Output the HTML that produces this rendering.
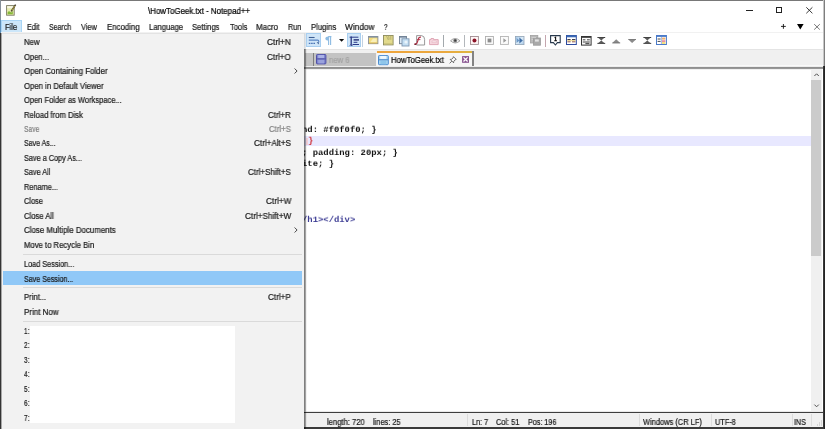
<!DOCTYPE html>
<html><head><meta charset="utf-8"><title>HowToGeek.txt - Notepad++</title>
<style>
*{margin:0;padding:0;box-sizing:border-box}
html,body{width:825px;height:429px;overflow:hidden;background:#fff}
body{position:relative;font-family:"Liberation Sans",sans-serif;font-size:8px;color:#1a1a1a}
.a{position:absolute}
.t{position:absolute;white-space:nowrap;line-height:10px;height:10px;transform-origin:0 0;will-change:transform;-webkit-text-stroke:.22px currentColor}
.m{font-family:"Liberation Mono",monospace;font-size:8.89px;-webkit-text-stroke:0;transform:scaleY(.9);transform-origin:0 7.5px}
svg{position:absolute;overflow:visible}
</style></head><body>

<!-- title bar + menubar + toolbar are white (body) -->
<!-- File highlight -->
<div class="a" style="left:1px;top:20px;width:21px;height:12.5px;background:#cce6f9;border:1px solid #a9d5f5"></div>

<div class="a" style="left:1px;top:32.2px;width:822px;height:1.2px;background:#f1f1f1"></div>
<!-- tab bar -->
<div class="a" style="left:304px;top:48.5px;width:519px;height:18.5px;background:#f0f0f0"></div>
<div class="a" style="left:304px;top:48.6px;width:519px;height:1.6px;background:linear-gradient(#e9e9e9,#e3e3e3 60%,#ececec)"></div>
<!-- inactive tab -->
<div class="a" style="left:305px;top:52.5px;width:71px;height:14px;background:#c3c3c3"></div>
<div class="a" style="left:312.7px;top:53px;width:1px;height:13.5px;background:#7e7e7e"></div>
<!-- active tab -->
<div class="a" style="left:376.8px;top:50.8px;width:96.7px;height:16px;background:#f6f6f6"></div>
<div class="a" style="left:376.8px;top:50.8px;width:96.7px;height:2.7px;background:linear-gradient(90deg,#eea43c,#eaa83e 70%,#dcb642)"></div>
<div class="a" style="left:472.2px;top:50.8px;width:1.6px;height:16px;background:#838383"></div>
<!-- tab/edit divider -->
<div class="a" style="left:474px;top:64.6px;width:348.6px;height:2.2px;background:linear-gradient(#f4f4f4,#fff 60%)"></div>
<div class="a" style="left:304px;top:66px;width:519px;height:1px;background:#ededed"></div>
<div class="a" style="left:304px;top:67px;width:519px;height:1px;background:#8f8f8f"></div>
<div class="a" style="left:304px;top:68px;width:519px;height:1px;background:#979797"></div>
<div class="a" style="left:306px;top:69px;width:505px;height:1px;background:#f0f0f0"></div>

<!-- editor -->
<div class="a" style="left:304px;top:135.7px;width:507px;height:10.5px;background:#e8e8ff"></div>
<div class="a" style="left:306.2px;top:137.5px;width:1.8px;height:7.5px;background:#f3cfd6"></div>
<div class="t m" style="left:307.6px;top:136.4px;color:#d0343c;font-weight:bold">}</div>
<div class="t m" style="left:302.3px;top:125.3px;color:#111;font-weight:bold">nd: #f0f0f0; }</div>
<div class="t m" style="left:302.3px;top:147.6px;color:#111;font-weight:bold">; padding: 20px; }</div>
<div class="t m" style="left:302.3px;top:158.8px;color:#111;font-weight:bold">ite; }</div>
<div class="t m" style="left:302.3px;top:214.5px;color:#3d3d94;font-weight:bold">/h1&gt;&lt;/div&gt;</div>

<!-- scrollbar -->
<div class="a" style="left:811px;top:68.5px;width:10.5px;height:343px;background:#f0f0f0"></div>
<div class="a" style="left:811.3px;top:80px;width:9.7px;height:176.4px;background:#cbcbcb"></div>
<svg style="left:813.6px;top:72.7px" width="6" height="4" viewBox="0 0 6 4"><path d="M0.4 3 L2.6 0.8 L4.8 3" fill="none" stroke="#505050" stroke-width="1"/></svg>
<svg style="left:813.7px;top:403.6px" width="6" height="4" viewBox="0 0 6 4"><path d="M0.4 0.6 L2.6 2.8 L4.8 0.6" fill="none" stroke="#505050" stroke-width="1"/></svg>

<!-- status bar -->
<div class="a" style="left:306px;top:410.6px;width:517px;height:1.3px;background:linear-gradient(#f4f4f4,#dedede)"></div>
<div class="a" style="left:304px;top:411.9px;width:519px;height:1.1px;background:#3e3e3e"></div>
<div class="a" style="left:304px;top:413px;width:519px;height:14.5px;background:#f0f0f0"></div>
<div class="a" style="left:467px;top:414px;width:1px;height:12px;background:#dcdcdc"></div>
<div class="a" style="left:638.5px;top:414px;width:1px;height:12px;background:#dcdcdc"></div>
<div class="a" style="left:710.5px;top:414px;width:1px;height:12px;background:#dcdcdc"></div>
<div class="a" style="left:791.5px;top:414px;width:1px;height:12px;background:#dcdcdc"></div>
<div class="a" style="left:810.5px;top:414px;width:1px;height:12px;background:#dcdcdc"></div>
<div class="a" style="left:304px;top:427.3px;width:521px;height:1.7px;background:#3a3a3a"></div>

<!-- window borders -->
<div class="a" style="left:0;top:0;width:825px;height:1.2px;background:#787878"></div>
<div class="a" style="left:0;top:0;width:1.1px;height:33.4px;background:linear-gradient(#858f98,#858f98 58%,#5f8fb8 62%,#5f8fb8)"></div>
<div class="a" style="left:823px;top:0;width:1px;height:66px;background:#c6c6c6"></div>
<div class="a" style="left:824px;top:0;width:1px;height:66px;background:#7e7e7e"></div>
<div class="a" style="left:822.6px;top:66px;width:2.4px;height:363px;background:linear-gradient(90deg,#555,#262626 40%,#222)"></div>

<!-- app icon -->
<svg style="left:6px;top:4px" width="11" height="12" viewBox="0 0 11 12">
<rect x="0.6" y="1.6" width="7.6" height="9.6" fill="#e6ecae" stroke="#7a7a62" stroke-width="0.9"/>
<rect x="1.2" y="2.2" width="6.4" height="2" fill="#f6f6e6"/>
<path d="M1.6 8.2 Q3 6.4 4.4 8 Q5.6 9.4 6.8 6.6 L6.8 10.2 L1.6 10.2 Z" fill="#86b83a"/>
<path d="M9.6 0.6 L5.2 7.4" stroke="#3a3326" stroke-width="1.5" fill="none"/>
<path d="M8.9 1.8 L5.9 6.4" stroke="#d8c040" stroke-width="0.7" fill="none"/>
</svg>

<!-- window controls -->
<div class="a" style="left:746.2px;top:9.6px;width:6.8px;height:1px;background:#222"></div>
<div class="a" style="left:775.8px;top:6.8px;width:6.3px;height:6px;border:1px solid #222"></div>
<svg style="left:806px;top:6.7px" width="7" height="7" viewBox="0 0 7 7"><path d="M0.3 0.3 L6.4 6.3 M6.4 0.3 L0.3 6.3" stroke="#222" stroke-width="0.9" fill="none"/></svg>
<!-- plus, arrow, x -->
<svg style="left:781.4px;top:24px" width="5" height="5" viewBox="0 0 5 5"><path d="M2.4 0 V4.8 M0 2.4 H4.8" stroke="#111" stroke-width="0.9" fill="none"/></svg>
<svg style="left:797.4px;top:24.2px" width="7" height="6" viewBox="0 0 7 6"><path d="M0 0 H6.6 L3.3 5.4 Z" fill="#000"/></svg>
<svg style="left:813.5px;top:24px" width="6" height="6" viewBox="0 0 6 6"><path d="M0.2 0.2 L5.8 5.6 M5.8 0.2 L0.2 5.6" stroke="#555" stroke-width="0.8" fill="none"/></svg>

<!-- toolbar -->
<!-- 1 wrap (checked) -->
<div class="a" style="left:306.4px;top:33.4px;width:14.2px;height:13.8px;background:#cfe5f8;border:0.8px solid #a9cff0"></div>
<svg style="left:308px;top:36px" width="12" height="10" viewBox="0 0 12 10">
<path d="M0.8 1.5 H6.6" stroke="#3d5f94" stroke-width="1.1"/>
<path d="M0.8 4.1 H9.6 Q10.8 4.1 10.8 5.4 V6.2" stroke="#5b86c4" stroke-width="1.1" fill="none"/>
<path d="M0.8 7.4 H7" stroke="#4a73b4" stroke-width="1.1" stroke-dasharray="1.6 0.7"/>
<path d="M8.6 6.2 L10.8 8.4 L10.9 6.2 Z" fill="#3d5f94"/>
</svg>
<!-- 2 pilcrow -->
<svg style="left:325px;top:36px" width="7" height="10" viewBox="0 0 7 10">
<path d="M3.2 0.6 H6.4 M3.6 0.6 V9 M5.6 0.6 V9" stroke="#8dbbe2" stroke-width="1.1" fill="none"/>
<path d="M3.4 0.6 Q0.4 0.6 0.4 2.6 Q0.4 4.6 3.4 4.6 Z" fill="#8dbbe2"/>
</svg>
<!-- 3 dropdown -->
<svg style="left:339px;top:39.4px" width="6" height="3" viewBox="0 0 6 3"><path d="M0 0 H5.2 L2.6 2.8 Z" fill="#0a0a0a"/></svg>
<!-- 4 indent guide (checked) -->
<div class="a" style="left:346.6px;top:33.4px;width:14.2px;height:13.8px;background:#cfe5f8;border:0.8px solid #a9cff0"></div>
<svg style="left:349px;top:35.6px" width="11" height="11" viewBox="0 0 11 11">
<path d="M2.2 0.6 V10" stroke="#1d2a78" stroke-width="1.2"/>
<path d="M0.6 1.2 H9.4" stroke="#2a3a8a" stroke-width="1"/>
<path d="M4.6 3.9 H10" stroke="#141e6a" stroke-width="1.3"/>
<path d="M4.6 6.3 H8.4" stroke="#2a3a8a" stroke-width="1"/>
<path d="M3.6 8.5 H10" stroke="#2a3a8a" stroke-width="1"/>
<path d="M0.6 9.6 L2.2 8 L3.8 9.6" stroke="#4a5aa0" stroke-width="0.8" fill="none"/>
</svg>
<div class="a" style="left:361.6px;top:34.5px;width:0.9px;height:12.5px;background:#c3d2e2"></div>
<!-- 6 yellow window -->
<svg style="left:368px;top:36.4px" width="11" height="9" viewBox="0 0 11 9">
<rect x="0.5" y="0.5" width="9.4" height="7.2" fill="#f3dc7c" stroke="#8b8f96" stroke-width="0.9"/>
<rect x="0.5" y="0.3" width="9.4" height="1.3" fill="#7d8ea3"/>
<path d="M2 6.6 L5 2.6 L8.6 2.6 L8.6 6.6 Z" fill="#f9efb8"/>
<path d="M1 7 H9.4" stroke="#d7b24c" stroke-width="0.9"/>
</svg>
<!-- 7 yellow doc -->
<svg style="left:383.3px;top:35.3px" width="11" height="11" viewBox="0 0 11 11">
<rect x="0.5" y="0.5" width="9.6" height="9.4" fill="#e2da8c" stroke="#8c8a5c" stroke-width="0.9"/>
<path d="M3.4 0.8 L5.4 5 M5.6 0.8 L6.2 4.6 M7.8 0.8 V4.8" stroke="#a7a266" stroke-width="0.7" fill="none"/>
<path d="M1 8.8 H9.6" stroke="#c8c078" stroke-width="1"/>
</svg>
<!-- 8 blue docs -->
<svg style="left:398.5px;top:35.5px" width="11" height="11" viewBox="0 0 11 11">
<rect x="0.5" y="0.5" width="7" height="7.2" fill="#dce9f4" stroke="#6f7f90" stroke-width="0.9"/>
<rect x="0.5" y="0.3" width="7" height="1.3" fill="#6f8096"/>
<rect x="3" y="2.8" width="7" height="7.2" fill="#c4def2" stroke="#7f97b2" stroke-width="0.9"/>
<circle cx="7" cy="6" r="1.6" fill="#eaf4fb"/>
</svg>
<!-- 9 red f doc -->
<svg style="left:413.6px;top:35.2px" width="12" height="11" viewBox="0 0 12 11">
<path d="M2.6 0.6 H7.6 Q10.6 1 10.6 4.4 V10 H2.6 Z" fill="#fdfdfd" stroke="#8d8d8d" stroke-width="0.9"/>
<path d="M7 2.2 Q4.8 1.8 4.4 4.2 L3 8 Q2.4 9.2 0.8 9.4" stroke="#b22f45" stroke-width="1.2" fill="none"/>
<path d="M3 4.6 H6.4" stroke="#b22f45" stroke-width="0.9"/>
<circle cx="1.2" cy="9.2" r="0.9" fill="#7a1f2f"/>
</svg>
<!-- 10 pink folder -->
<svg style="left:429.4px;top:37.6px" width="10" height="8" viewBox="0 0 10 8">
<path d="M0.5 1.6 H2 V0.5 H4.6 V1.6 H9.2 V6.6 H0.5 Z" fill="#f6d6de" stroke="#dca0b0" stroke-width="0.9"/>
<path d="M3 3 H7.4 V4.6 H3 Z" fill="#fbeef1" stroke="#e4b4c0" stroke-width="0.6"/>
</svg>
<div class="a" style="left:443.2px;top:34.8px;width:0.9px;height:12.2px;background:#a3a9ad"></div>
<!-- 12 eye -->
<svg style="left:450px;top:37px" width="11" height="8" viewBox="0 0 11 8">
<path d="M0.5 3.8 Q5.2 -0.8 10 3.8 Q5.2 8.2 0.5 3.8 Z" fill="#f1f1f1" stroke="#9c9c9c" stroke-width="0.9"/>
<circle cx="5.2" cy="3.6" r="1.9" fill="#7e7e7e"/>
<circle cx="5.2" cy="3.4" r="1" fill="#3c3c3c"/>
</svg>
<div class="a" style="left:463.8px;top:34.8px;width:0.9px;height:12.2px;background:#b3b7bb"></div>
<!-- 14 record -->
<svg style="left:470px;top:36px" width="9" height="9" viewBox="0 0 9 9">
<rect x="0.5" y="0.5" width="7.9" height="7.9" fill="#fff6f6" stroke="#a08c90" stroke-width="0.9"/>
<circle cx="4.45" cy="4.45" r="2" fill="#8c1226"/>
</svg>
<!-- 15 stop -->
<svg style="left:485px;top:36px" width="9" height="9" viewBox="0 0 9 9">
<rect x="0.5" y="0.5" width="7.9" height="7.9" fill="#fbfbfb" stroke="#aeaeae" stroke-width="0.9"/>
<rect x="2.6" y="2.6" width="3.8" height="3.8" fill="#8c8c8c"/>
</svg>
<!-- 16 play -->
<svg style="left:500.3px;top:36px" width="9" height="9" viewBox="0 0 9 9">
<rect x="0.5" y="0.5" width="7.9" height="7.9" fill="#fbfbfb" stroke="#b4b4b4" stroke-width="0.9"/>
<path d="M3.4 2.2 L6.4 4.45 L3.4 6.7 Z" fill="#9a9a9a"/>
</svg>
<!-- 17 ff -->
<svg style="left:515.3px;top:35.9px" width="10" height="9" viewBox="0 0 10 9">
<defs><linearGradient id="gff" x1="0" y1="0" x2="1" y2="1"><stop offset="0" stop-color="#9ec3e6"/><stop offset="0.5" stop-color="#dcecf8"/><stop offset="1" stop-color="#a9cbe9"/></linearGradient></defs>
<rect x="0.4" y="0.4" width="8.6" height="8.2" fill="url(#gff)" stroke="#93a4b6" stroke-width="0.8"/>
<path d="M1.6 2 L4.6 4.5 L1.6 7 Z" fill="#6c98c8"/>
<path d="M4.4 1.6 L7.8 4.5 L4.4 7.4 Z" fill="#3f6ea6"/>
</svg>
<!-- 18 gray docs -->
<svg style="left:530px;top:35.3px" width="11" height="11" viewBox="0 0 11 11">
<rect x="0.4" y="0.4" width="7.4" height="7.6" fill="#b9b9b9" stroke="#a2a2a2" stroke-width="0.8"/>
<rect x="3.4" y="3" width="7" height="7.2" fill="#a9a9a9" stroke="#9a9a9a" stroke-width="0.8"/>
<rect x="5" y="4.4" width="3.8" height="2.2" fill="#e2e2e2"/>
<path d="M1.6 2.6 H6 M1.6 4.6 H3" stroke="#d8d8d8" stroke-width="0.8"/>
</svg>
<div class="a" style="left:544.5px;top:34.8px;width:0.9px;height:12.2px;background:#c4a6ae"></div>
<!-- 20 '1' callout -->
<svg style="left:550px;top:35.3px" width="11" height="11" viewBox="0 0 11 11">
<path d="M0.6 0.6 H10.2 V7.6 H7.4 L5.4 10 L3.4 7.6 H0.6 Z" fill="#fff" stroke="#28394c" stroke-width="1.1"/>
<path d="M4.6 2.8 L5.6 2.2 V5.6 M4.2 5.8 H7" stroke="#111" stroke-width="1.1" fill="none"/>
</svg>
<!-- 21 blue table -->
<svg style="left:565.6px;top:35.3px" width="11" height="10" viewBox="0 0 11 10">
<rect x="0.5" y="0.5" width="9.8" height="9" fill="#fff" stroke="#2c4a9c" stroke-width="1"/>
<rect x="0.5" y="0.3" width="9.8" height="2" fill="#3b69b6"/>
<path d="M1.4 4.6 H4.6 M6 4.6 H9.4" stroke="#2a2a3a" stroke-width="1"/>
<path d="M1.4 6.8 H4.6 M6 6.8 H9.4" stroke="#7a3a3a" stroke-width="0.9"/>
<path d="M1.2 5.7 H9.6" stroke="#e8d060" stroke-width="0.7"/>
</svg>
<!-- 22 dark table -->
<svg style="left:581px;top:35.5px" width="11" height="10" viewBox="0 0 11 10">
<rect x="0.5" y="0.5" width="9.6" height="8.6" fill="#fafafa" stroke="#333" stroke-width="1"/>
<path d="M0.6 1.4 H10" stroke="#444" stroke-width="1"/>
<path d="M1.8 3.8 H4.4 M6 3.8 H8.8 M1.8 6 H8.8" stroke="#333" stroke-width="0.9"/>
<path d="M4.4 7.6 H8.4" stroke="#555" stroke-width="1.3"/>
</svg>
<!-- 23 hourglass -->
<svg style="left:596.8px;top:37px" width="9" height="7" viewBox="0 0 9 7">
<path d="M0.4 0.5 H8.2 M0.4 6.4 H8.2" stroke="#3c3c3c" stroke-width="1"/>
<path d="M1.2 0.8 H7.4 L4.3 3.4 Z M4.3 3.4 L7.6 6.2 H1 Z" fill="#5a5a5a"/>
</svg>
<!-- 24 up -->
<svg style="left:612px;top:38.6px" width="9" height="5" viewBox="0 0 9 5"><path d="M0.3 4 L4.2 0.3 L8.2 4 Z" fill="#8a8a8a"/><path d="M0.3 4 H8.2" stroke="#6a6a6a" stroke-width="0.8"/></svg>
<!-- 25 down -->
<svg style="left:627.6px;top:38.6px" width="9" height="5" viewBox="0 0 9 5"><path d="M0.3 0.4 L4.1 4.1 L8 0.4 Z" fill="#8a8a8a"/><path d="M0.3 0.5 H8" stroke="#6a6a6a" stroke-width="0.8"/></svg>
<!-- 26 hourglass -->
<svg style="left:642.6px;top:37px" width="9" height="7" viewBox="0 0 9 7">
<path d="M0.4 0.5 H8.2 M0.4 6.4 H8.2" stroke="#3c3c3c" stroke-width="1"/>
<path d="M1.2 0.8 H7.4 L4.3 3.4 Z M4.3 3.4 L7.6 6.2 H1 Z" fill="#5a5a5a"/>
</svg>
<!-- 27 colour table -->
<svg style="left:656.2px;top:35.3px" width="11" height="10" viewBox="0 0 11 10">
<rect x="0.5" y="0.5" width="9.9" height="9" fill="#fff" stroke="#4a7ac8" stroke-width="1"/>
<rect x="0.5" y="0.3" width="9.9" height="1.6" fill="#4a7ac8"/>
<path d="M1.6 4 H4.6 M1.6 6.4 H4.6" stroke="#333" stroke-width="0.9"/>
<rect x="6" y="2.6" width="3.4" height="2" fill="#f0b070"/>
<rect x="6" y="5.2" width="3.4" height="1.8" fill="#e890a0"/>
<rect x="6" y="7.2" width="3.4" height="1.6" fill="#f0d860"/>
<path d="M5.4 2 V9" stroke="#7a9ad8" stroke-width="0.7"/>
</svg>

<!-- tab icons -->
<svg style="left:316px;top:54.2px" width="11" height="11" viewBox="0 0 11 11">
<rect x="0.5" y="0.5" width="9.4" height="9.4" rx="0.8" fill="#7f86cf" stroke="#5050a8" stroke-width="1"/>
<rect x="2.2" y="0.9" width="5.8" height="3.2" fill="#aab2e6"/>
<rect x="2.2" y="5.8" width="5.8" height="3.6" fill="#9aa2dc"/>
<path d="M0.8 4.9 H9.6" stroke="#4a4aa0" stroke-width="0.9"/>
</svg>
<svg style="left:378px;top:54.6px" width="11" height="11" viewBox="0 0 11 11">
<rect x="0.5" y="0.5" width="9.8" height="9.2" rx="0.8" fill="#a9d6f1" stroke="#4b8bd0" stroke-width="1"/>
<rect x="2.2" y="0.9" width="6.2" height="3" fill="#eef7fd"/>
<rect x="2.4" y="5.8" width="6" height="3.6" fill="#8fc6ea"/>
<path d="M0.8 4.8 H10" stroke="#3f7cc4" stroke-width="0.9"/>
</svg>
<!-- pin -->
<svg style="left:449.2px;top:55.6px" width="8" height="8" viewBox="0 0 8 8">
<path d="M4.4 0.6 L7.2 3.4 L6.2 3.8 L4.8 5.4 L4.6 6.8 L1.2 3.4 L2.6 3.2 L4.2 1.8 Z" fill="#fafafa" stroke="#4a4a4a" stroke-width="0.8"/>
<path d="M2.8 5.2 L0.6 7.4" stroke="#4a4a4a" stroke-width="0.8"/>
</svg>
<!-- close box -->
<svg style="left:462px;top:56.1px" width="8" height="7" viewBox="0 0 8 7">
<rect x="0.1" y="0.1" width="6.9" height="6.7" fill="#86508e"/>
<path d="M1.5 1.4 L5.6 5.5 M5.6 1.4 L1.5 5.5" stroke="#fff" stroke-width="1.3"/>
</svg>
<!-- size grip -->
<svg style="left:815px;top:420px" width="7" height="7" viewBox="0 0 7 7"><path d="M6 1 h0.9 M4 3 h0.9 M6 3 h0.9 M2 5 h0.9 M4 5 h0.9 M6 5 h0.9" stroke="#aaa" stroke-width="0.9"/></svg>


<!-- MENU -->
<div class="a" style="left:1.2px;top:32.8px;width:302.8px;height:396.2px;background:#f2f2f2"></div>
<div class="a" style="left:1.2px;top:32.8px;width:302.8px;height:1.1px;background:#e3e3e3"></div>
<div class="a" style="left:0;top:33.4px;width:1.6px;height:395.6px;background:linear-gradient(90deg,#2e2e2e,#3a3a3a 45%,#a8a8a8 75%,#dcdcdc)"></div>
<div class="a" style="left:304px;top:33.4px;width:2.2px;height:15.6px;background:linear-gradient(90deg,rgba(90,110,130,.28),rgba(90,110,130,.16))"></div>
<div class="a" style="left:304px;top:49px;width:1px;height:380px;background:rgba(0,0,0,.50)"></div>
<div class="a" style="left:305px;top:49px;width:1px;height:380px;background:rgba(0,0,0,.36)"></div>
<div class="a" style="left:306px;top:49px;width:1px;height:380px;background:rgba(0,0,0,.05)"></div>
<div class="a" style="left:2.6px;top:271.2px;width:299.4px;height:14.1px;background:#90c8f7"></div>
<div class="a" style="left:30.2px;top:326.4px;width:204.8px;height:96.3px;background:#fff"></div>
<div class="a" style="left:23px;top:253.6px;width:279px;height:1px;background:#dadada"></div>
<div class="a" style="left:23px;top:287.3px;width:279px;height:1px;background:#dadada"></div>
<div class="a" style="left:23px;top:320.6px;width:279px;height:1px;background:#dadada"></div>
<svg style="left:293.6px;top:67.8px" width="4" height="6" viewBox="0 0 4 6"><path d="M0.6 0.5 L3.1 3 L0.6 5.5" fill="none" stroke="#333" stroke-width="0.9"/></svg>
<svg style="left:293.6px;top:226.7px" width="4" height="6" viewBox="0 0 4 6"><path d="M0.6 0.5 L3.1 3 L0.6 5.5" fill="none" stroke="#333" stroke-width="0.9"/></svg>

<div class="t" style="left:147.5px;top:5.8px;font-size:8.4px;color:#000;transform:scaleX(0.945);">\HowToGeek.txt - Notepad++</div>
<div class="t" style="left:5.3px;top:22.3px;font-size:8.4px;color:#1a1a1a;transform:scaleX(0.904);">File</div>
<div class="t" style="left:26.7px;top:22.3px;font-size:8.4px;color:#1a1a1a;transform:scaleX(0.873);">Edit</div>
<div class="t" style="left:49.0px;top:22.3px;font-size:8.4px;color:#1a1a1a;transform:scaleX(0.829);">Search</div>
<div class="t" style="left:81.2px;top:22.3px;font-size:8.4px;color:#1a1a1a;transform:scaleX(0.878);">View</div>
<div class="t" style="left:106.7px;top:22.3px;font-size:8.4px;color:#1a1a1a;transform:scaleX(0.936);">Encoding</div>
<div class="t" style="left:148.7px;top:22.3px;font-size:8.4px;color:#1a1a1a;transform:scaleX(0.915);">Language</div>
<div class="t" style="left:192.4px;top:22.3px;font-size:8.4px;color:#1a1a1a;transform:scaleX(0.905);">Settings</div>
<div class="t" style="left:229.5px;top:22.3px;font-size:8.4px;color:#1a1a1a;transform:scaleX(0.895);">Tools</div>
<div class="t" style="left:256.0px;top:22.3px;font-size:8.4px;color:#1a1a1a;transform:scaleX(0.950);">Macro</div>
<div class="t" style="left:288.0px;top:22.3px;font-size:8.4px;color:#1a1a1a;transform:scaleX(0.866);">Run</div>
<div class="t" style="left:310.7px;top:22.3px;font-size:8.4px;color:#1a1a1a;transform:scaleX(0.921);">Plugins</div>
<div class="t" style="left:345.3px;top:22.3px;font-size:8.4px;color:#1a1a1a;transform:scaleX(0.987);">Window</div>
<div class="t" style="left:383.5px;top:22.3px;font-size:8.4px;color:#1a1a1a;transform:scaleX(0.730);">?</div>
<div class="t" style="left:328.5px;top:55.3px;font-size:8.4px;color:#a3a3a3;transform:scaleX(0.917);">new 6</div>
<div class="t" style="left:390.6px;top:55.3px;font-size:8.6px;color:#000;transform:scaleX(0.904);">HowToGeek.txt</div>
<div class="t" style="left:327.2px;top:416.7px;font-size:8.4px;color:#1a1a1a;transform:scaleX(0.910);">length: 720</div>
<div class="t" style="left:373.0px;top:416.7px;font-size:8.4px;color:#1a1a1a;transform:scaleX(0.882);">lines: 25</div>
<div class="t" style="left:472.0px;top:416.7px;font-size:8.4px;color:#1a1a1a;transform:scaleX(0.864);">Ln: 7</div>
<div class="t" style="left:496.2px;top:416.7px;font-size:8.4px;color:#1a1a1a;transform:scaleX(0.878);">Col: 51</div>
<div class="t" style="left:527.7px;top:416.7px;font-size:8.4px;color:#1a1a1a;transform:scaleX(0.856);">Pos: 196</div>
<div class="t" style="left:642.9px;top:416.7px;font-size:8.4px;color:#1a1a1a;transform:scaleX(0.891);">Windows (CR LF)</div>
<div class="t" style="left:715.0px;top:416.7px;font-size:8.4px;color:#1a1a1a;transform:scaleX(0.877);">UTF-8</div>
<div class="t" style="left:794.2px;top:416.7px;font-size:8.4px;color:#1a1a1a;transform:scaleX(0.845);">INS</div>
<div class="t" style="left:23.8px;top:37.3px;font-size:8.4px;color:#1a1a1a;transform:scaleX(0.931);">New</div>
<div class="t" style="left:267.3px;top:37.3px;font-size:8.4px;color:#1a1a1a;transform:scaleX(0.989);">Ctrl+N</div>
<div class="t" style="left:23.8px;top:51.8px;font-size:8.4px;color:#1a1a1a;transform:scaleX(0.910);">Open...</div>
<div class="t" style="left:267.3px;top:51.8px;font-size:8.4px;color:#1a1a1a;transform:scaleX(0.970);">Ctrl+O</div>
<div class="t" style="left:23.8px;top:66.2px;font-size:8.4px;color:#1a1a1a;transform:scaleX(0.939);">Open Containing Folder</div>
<div class="t" style="left:23.8px;top:80.6px;font-size:8.4px;color:#1a1a1a;transform:scaleX(0.925);">Open in Default Viewer</div>
<div class="t" style="left:23.8px;top:95.1px;font-size:8.4px;color:#1a1a1a;transform:scaleX(0.898);">Open Folder as Workspace...</div>
<div class="t" style="left:23.8px;top:109.5px;font-size:8.4px;color:#1a1a1a;transform:scaleX(0.917);">Reload from Disk</div>
<div class="t" style="left:268.3px;top:109.5px;font-size:8.4px;color:#1a1a1a;transform:scaleX(0.947);">Ctrl+R</div>
<div class="t" style="left:23.8px;top:124.0px;font-size:8.4px;color:#808080;transform:scaleX(0.802);">Save</div>
<div class="t" style="left:269.2px;top:124.0px;font-size:8.4px;color:#808080;transform:scaleX(0.928);">Ctrl+S</div>
<div class="t" style="left:23.8px;top:138.4px;font-size:8.4px;color:#1a1a1a;transform:scaleX(0.838);">Save As...</div>
<div class="t" style="left:254.0px;top:138.4px;font-size:8.4px;color:#1a1a1a;transform:scaleX(0.969);">Ctrl+Alt+S</div>
<div class="t" style="left:23.8px;top:152.9px;font-size:8.4px;color:#1a1a1a;transform:scaleX(0.871);">Save a Copy As...</div>
<div class="t" style="left:23.8px;top:167.3px;font-size:8.4px;color:#1a1a1a;transform:scaleX(0.869);">Save All</div>
<div class="t" style="left:248.2px;top:167.3px;font-size:8.4px;color:#1a1a1a;transform:scaleX(0.948);">Ctrl+Shift+S</div>
<div class="t" style="left:23.8px;top:181.8px;font-size:8.4px;color:#1a1a1a;transform:scaleX(0.880);">Rename...</div>
<div class="t" style="left:23.8px;top:196.2px;font-size:8.4px;color:#1a1a1a;transform:scaleX(0.883);">Close</div>
<div class="t" style="left:265.7px;top:196.2px;font-size:8.4px;color:#1a1a1a;transform:scaleX(0.980);">Ctrl+W</div>
<div class="t" style="left:23.8px;top:210.7px;font-size:8.4px;color:#1a1a1a;transform:scaleX(0.914);">Close All</div>
<div class="t" style="left:244.7px;top:210.7px;font-size:8.4px;color:#1a1a1a;transform:scaleX(0.975);">Ctrl+Shift+W</div>
<div class="t" style="left:23.8px;top:225.2px;font-size:8.4px;color:#1a1a1a;transform:scaleX(0.943);">Close Multiple Documents</div>
<div class="t" style="left:23.8px;top:239.6px;font-size:8.4px;color:#1a1a1a;transform:scaleX(0.920);">Move to Recycle Bin</div>
<div class="t" style="left:23.8px;top:259.1px;font-size:8.4px;color:#1a1a1a;transform:scaleX(0.870);">Load Session...</div>
<div class="t" style="left:23.8px;top:273.6px;font-size:8.4px;color:#1a1a1a;transform:scaleX(0.847);">Save Session...</div>
<div class="t" style="left:23.8px;top:292.3px;font-size:8.4px;color:#1a1a1a;transform:scaleX(0.917);">Print...</div>
<div class="t" style="left:268.3px;top:292.3px;font-size:8.4px;color:#1a1a1a;transform:scaleX(0.966);">Ctrl+P</div>
<div class="t" style="left:23.8px;top:307.0px;font-size:8.4px;color:#1a1a1a;transform:scaleX(0.953);">Print Now</div>
<div class="t" style="left:24.2px;top:325.6px;font-size:8.4px;color:#1a1a1a;transform:scaleX(0.773);">1:</div>
<div class="t" style="left:24.2px;top:340.1px;font-size:8.4px;color:#1a1a1a;transform:scaleX(0.773);">2:</div>
<div class="t" style="left:24.2px;top:354.6px;font-size:8.4px;color:#1a1a1a;transform:scaleX(0.773);">3:</div>
<div class="t" style="left:24.2px;top:369.1px;font-size:8.4px;color:#1a1a1a;transform:scaleX(0.773);">4:</div>
<div class="t" style="left:24.2px;top:383.6px;font-size:8.4px;color:#1a1a1a;transform:scaleX(0.773);">5:</div>
<div class="t" style="left:24.2px;top:398.1px;font-size:8.4px;color:#1a1a1a;transform:scaleX(0.773);">6:</div>
<div class="t" style="left:24.2px;top:412.6px;font-size:8.4px;color:#1a1a1a;transform:scaleX(0.773);">7:</div>
</body></html>
